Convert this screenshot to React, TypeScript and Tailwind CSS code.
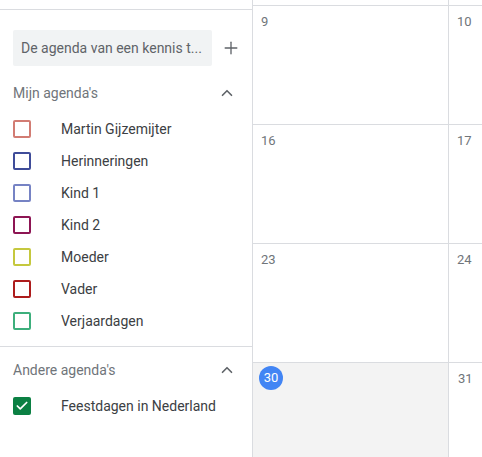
import { Plus, ChevronUp, Check } from "lucide-react"

const mine = [
  { name: "Martin Gijzemijter", color: "border-[#d27c73]" },
  { name: "Herinneringen", color: "border-[#3f4c99]" },
  { name: "Kind 1", color: "border-[#7683c4]" },
  { name: "Kind 2", color: "border-[#8d1553]" },
  { name: "Moeder", color: "border-[#c5c83e]" },
  { name: "Vader", color: "border-[#ad1c1c]" },
  { name: "Verjaardagen", color: "border-[#3daf7c]" },
]

const weeks = [
  ["9", "10"],
  ["16", "17"],
  ["23", "24"],
]

function SectionHeader({ label }: { label: string }) {
  return (
    <div className="flex h-[40px] items-center justify-between pl-[13px] pr-[16px]">
      <span className="text-[14px] text-[#70757a]">{label}</span>
      <ChevronUp className="h-[18px] w-[18px] text-[#5f6368]" strokeWidth={2.2} />
    </div>
  )
}

export default function App() {
  return (
    <div
      className="flex h-[457px] w-[482px] overflow-hidden bg-white"
      style={{ fontFamily: "Roboto, 'Liberation Sans', sans-serif" }}
    >
      <aside className="flex w-[252px] shrink-0 flex-col">
        <div className="h-[10px] border-b border-[#dadce0]" />

        <div className="mt-[20px] flex items-center pl-[13px]">
          <div className="flex h-[36px] w-[199px] items-center rounded-[2px] bg-[#f1f3f4] pl-[8px] text-[14px] text-[#5f6368]">
            De agenda van een kennis t...
          </div>
          <Plus className="ml-[9px] h-[20px] w-[20px] text-[#5f6368]" strokeWidth={1.6} />
        </div>

        <div className="mt-[7px]">
          <SectionHeader label="Mijn agenda's" />
        </div>

        <ul>
          {mine.map((c) => (
            <li key={c.name} className="flex h-[32px] items-center pl-[13px]">
              <span className={`h-[18px] w-[18px] rounded-[2px] border-2 ${c.color}`} />
              <span className="ml-[30px] text-[14px] text-[#3c4043]">{c.name}</span>
            </li>
          ))}
        </ul>

        <div className="mt-[9px] border-t border-[#dadce0]" />

        <div className="mt-[3px]">
          <SectionHeader label="Andere agenda's" />
        </div>

        <div className="flex h-[32px] items-center pl-[13px]">
          <span className="flex h-[18px] w-[18px] items-center justify-center rounded-[2px] bg-[#0b8043]">
            <Check className="h-[14px] w-[14px] text-white" strokeWidth={3} />
          </span>
          <span className="ml-[30px] text-[14px] text-[#3c4043]">Feestdagen in Nederland</span>
        </div>
      </aside>

      <main className="flex flex-1 flex-col border-l border-[#dadce0]">
        <div className="flex h-[6px] shrink-0 border-b border-[#dadce0]">
          <div className="w-[196px] border-r border-[#dadce0]" />
        </div>
        {weeks.map((w) => (
          <div key={w[0]} className="flex h-[119px] shrink-0 border-b border-[#dadce0]">
            <div className="w-[196px] border-r border-[#dadce0] pl-[8px] pt-[6px] text-[13px] text-[#70757a]">
              {w[0]}
            </div>
            <div className="flex-1 pl-[8px] pt-[6px] text-[13px] text-[#70757a]">{w[1]}</div>
          </div>
        ))}
        <div className="flex flex-1">
          <div className="w-[196px] border-r border-[#dadce0] bg-[#f3f3f3] pl-[6px] pt-[3px]">
            <span className="flex h-[24px] w-[24px] items-center justify-center rounded-full bg-[#4285f4] text-[13px] text-white">
              30
            </span>
          </div>
          <div className="flex-1 pl-[9px] pt-[6px] text-[13px] text-[#70757a]">31</div>
        </div>
      </main>
    </div>
  )
}
